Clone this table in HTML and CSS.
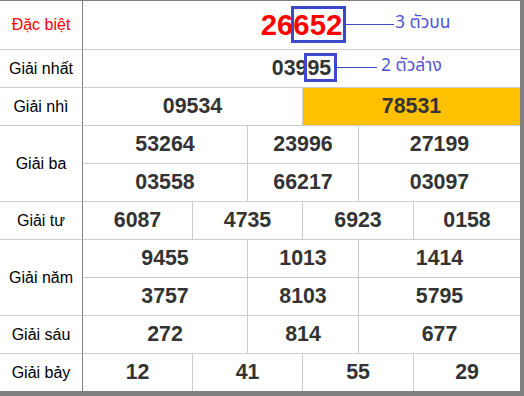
FILE: index.html
```html
<!DOCTYPE html>
<html lang="vi">
<head>
<meta charset="utf-8">
<title>Kết quả xổ số</title>
<link rel="stylesheet" href="styles.css">
</head>
<body>
<div class="board">
  <div class="grid">
    <div class="label special-label r1">Đặc biệt</div>
    <div class="num special s8">26652</div>

    <div class="label">Giải nhất</div>
    <div class="num s8">03995</div>

    <div class="label">Giải nhì</div>
    <div class="num s4">09534</div>
    <div class="num s4 gold sep">78531</div>

    <div class="label tall">Giải ba</div>
    <div class="num s3">53264</div>
    <div class="num s2 sep">23996</div>
    <div class="num s3 sep">27199</div>
    <div class="num s3">03558</div>
    <div class="num s2 sep">66217</div>
    <div class="num s3 sep">03097</div>

    <div class="label">Giải tư</div>
    <div class="num s2">6087</div>
    <div class="num s2 sep">4735</div>
    <div class="num s2 sep">6923</div>
    <div class="num s2 sep">0158</div>

    <div class="label tall">Giải năm</div>
    <div class="num s3">9455</div>
    <div class="num s2 sep">1013</div>
    <div class="num s3 sep">1414</div>
    <div class="num s3">3757</div>
    <div class="num s2 sep">8103</div>
    <div class="num s3 sep">5795</div>

    <div class="label">Giải sáu</div>
    <div class="num s3">272</div>
    <div class="num s2 sep">814</div>
    <div class="num s3 sep">677</div>

    <div class="label">Giải bảy</div>
    <div class="num s2">12</div>
    <div class="num s2 sep">41</div>
    <div class="num s2 sep">55</div>
    <div class="num s2 sep">29</div>
  </div>

  <div class="mark mark-top"></div>
  <div class="wire wire-top"></div>
  <div class="note note-top">3 ตัวบน</div>

  <div class="mark mark-bottom"></div>
  <div class="wire wire-bottom"></div>
  <div class="note note-bottom">2 ตัวล่าง</div>
</div>
</body>
</html>
```

FILE: styles.css
```css
* { box-sizing: border-box; }

html, body {
  margin: 0;
  padding: 0;
  background: #ffffff;
}

.board {
  position: relative;
  width: 524px;
  height: 396px;
  border-top: 1px solid #808080;
  border-right: 4px solid #808080;
  border-bottom: 5px solid #808080;
  background: #ffffff;
  font-family: "Liberation Sans", Arial, sans-serif;
}

.grid {
  display: grid;
  grid-template-columns: 83px 54px 55px 55px 55px 56px 55px 54px 53px;
  grid-template-rows: 48px repeat(9, 38px);
}

.label {
  grid-column: 1;
  display: flex;
  align-items: center;
  justify-content: center;
  font-size: 16px;
  color: #000;
  border-right: 1px solid #808080;
  border-top: 1px solid #cccccc;
}

.label.r1 { border-top: none; }
.label.tall { grid-row: span 2; }

.special-label { color: #ff0000; }

.num {
  display: flex;
  align-items: center;
  justify-content: center;
  font-size: 21.33px;
  font-weight: bold;
  color: #333333;
  border-top: 1px solid #cccccc;
}

.num.sep { border-left: 1px solid #cccccc; }

.s2 { grid-column: span 2; }
.s3 { grid-column: span 3; }
.s4 { grid-column: span 4; }
.s8 { grid-column: span 8; }

.special {
  border-top: none;
  color: #ff0000;
  font-size: 29.33px;
}

.gold { background: #ffc000; }

.mark {
  position: absolute;
  border: 3px solid #3f48cc;
}

.mark-top {
  left: 291px;
  top: 5px;
  width: 55px;
  height: 37px;
}

.mark-bottom {
  left: 304px;
  top: 52px;
  width: 33px;
  height: 29px;
}

.wire {
  position: absolute;
  height: 1px;
  background: #3f48cc;
}

.wire-top {
  left: 346px;
  top: 23px;
  width: 48px;
}

.wire-bottom {
  left: 337px;
  top: 66px;
  width: 40px;
}

.note {
  position: absolute;
  font-family: "Noto Sans Thai", Tahoma, "Liberation Sans", sans-serif;
  font-size: 17.5px;
  line-height: 20px;
  color: #4f52d4;
  white-space: nowrap;
}

.note-top {
  left: 395px;
  top: 12px;
}

.note-bottom {
  left: 381px;
  top: 55px;
}
```
